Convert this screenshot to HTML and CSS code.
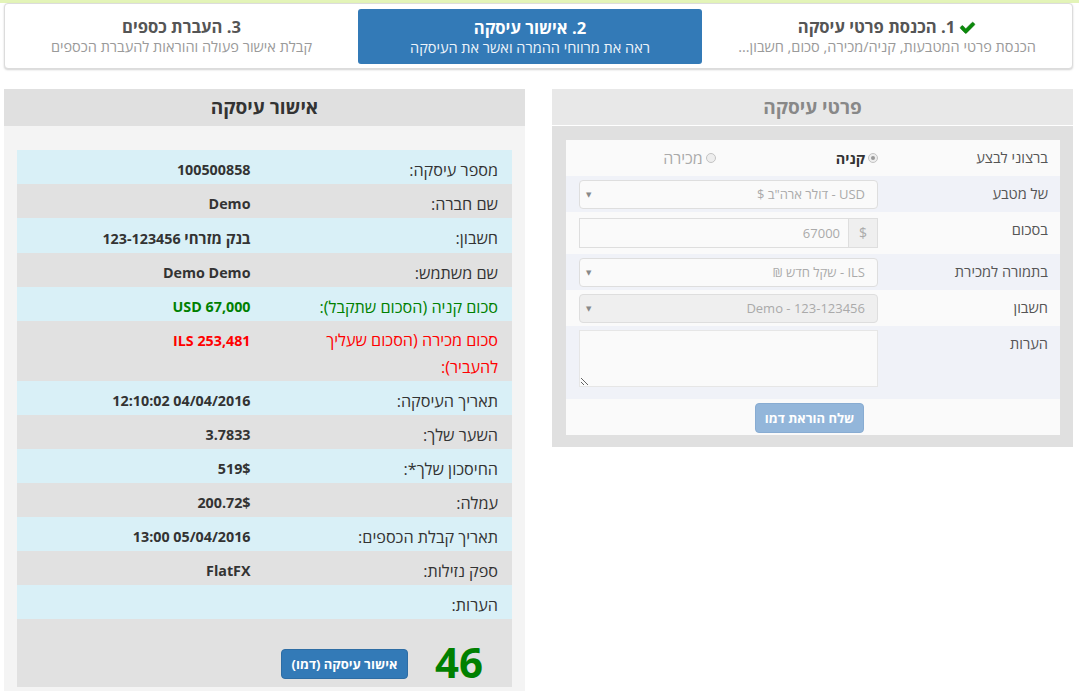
FILE: index.html
```html
<!DOCTYPE html>
<html lang="he" dir="rtl">
<head>
<meta charset="utf-8">
<title>אישור עיסקה</title>
<link rel="stylesheet" href="styles.css">
</head>
<body>
<div class="topline"></div>
<div class="steps">
  <div class="step">
    <div class="step-title"><svg class="check" viewBox="0 0 1792 1792" width="17" height="17"><path fill="#0a8a0a" stroke="#0b5e0b" stroke-width="40" d="M1671 566q0 40-28 68l-724 724-136 136q-28 28-68 28t-68-28l-136-136-362-362q-28-28-28-68t28-68l136-136q28-28 68-28t68 28l294 295 656-657q28-28 68-28t68 28l136 136q28 28 28 68z"/></svg>1. הכנסת פרטי עיסקה</div>
    <div class="step-sub">הכנסת פרטי המטבעות, קניה/מכירה, סכום, חשבון...</div>
  </div>
  <div class="step active">
    <div class="step-title">2. אישור עיסקה</div>
    <div class="step-sub">ראה את מרווחי ההמרה ואשר את העיסקה</div>
  </div>
  <div class="step">
    <div class="step-title">3. העברת כספים</div>
    <div class="step-sub">קבלת אישור פעולה והוראות להעברת הכספים</div>
  </div>
</div>

<div class="main">
  <section class="panel form-panel">
    <div class="panel-head">פרטי עיסקה</div>
    <div class="panel-body">
      <div class="form">
        <div class="frow r-odd">
          <div class="flabel">ברצוני לבצע</div>
          <div class="fctl radios">
            <span class="radio"><span class="dot on"></span><b>קניה</b></span>
            <span class="radio off"><span class="dot"></span>מכירה</span>
          </div>
        </div>
        <div class="frow r-even">
          <div class="flabel">של מטבע</div>
          <div class="fctl"><div class="select">USD - דולר ארה"ב $<span class="caret">▼</span></div></div>
        </div>
        <div class="frow r-odd tall">
          <div class="flabel">בסכום</div>
          <div class="fctl"><div class="igroup"><span class="addon">$</span><span class="input">67000</span></div></div>
        </div>
        <div class="frow r-even">
          <div class="flabel">בתמורה למכירת</div>
          <div class="fctl"><div class="select">ILS - שקל חדש ₪<span class="caret">▼</span></div></div>
        </div>
        <div class="frow r-odd">
          <div class="flabel">חשבון</div>
          <div class="fctl"><div class="select disabled">123-123456 - Demo<span class="caret">▼</span></div></div>
        </div>
        <div class="frow r-even notes">
          <div class="flabel">הערות</div>
          <div class="fctl"><textarea class="textarea"></textarea></div>
        </div>
        <div class="frow r-odd btnrow">
          <button class="btn-demo" type="button">שלח הוראת דמו</button>
        </div>
      </div>
    </div>
  </section>

  <section class="panel confirm-panel">
    <div class="panel-head dark">אישור עיסקה</div>
    <div class="panel-body light">
      <div class="table">
        <div class="trow info"><div class="tl">מספר עיסקה:</div><div class="tv">100500858</div></div>
        <div class="trow gray"><div class="tl">שם חברה:</div><div class="tv">Demo</div></div>
        <div class="trow info"><div class="tl">חשבון:</div><div class="tv"><span class="he">בנק מזרחי</span> 123-123456</div></div>
        <div class="trow gray"><div class="tl">שם משתמש:</div><div class="tv">Demo Demo</div></div>
        <div class="trow info green"><div class="tl">סכום קניה (הסכום שתקבל):</div><div class="tv">67,000 USD</div></div>
        <div class="trow gray red"><div class="tl">סכום מכירה (הסכום שעליך להעביר):</div><div class="tv">253,481 ILS</div></div>
        <div class="trow info"><div class="tl">תאריך העיסקה:</div><div class="tv">04/04/2016 12:10:02</div></div>
        <div class="trow gray"><div class="tl">השער שלך:</div><div class="tv">3.7833</div></div>
        <div class="trow info"><div class="tl">החיסכון שלך*:</div><div class="tv">519$</div></div>
        <div class="trow gray"><div class="tl">עמלה:</div><div class="tv">200.72$</div></div>
        <div class="trow info"><div class="tl">תאריך קבלת הכספים:</div><div class="tv">05/04/2016 13:00</div></div>
        <div class="trow gray"><div class="tl">ספק נזילות:</div><div class="tv">FlatFX</div></div>
        <div class="trow info"><div class="tl">הערות:</div><div class="tv"></div></div>
        <div class="tfoot">
          <span class="timer">46</span>
          <button class="btn-confirm" type="button">אישור עיסקה (דמו)</button>
        </div>
      </div>
    </div>
  </section>
</div>
</body>
</html>
```

FILE: styles.css
```css
* { box-sizing: border-box; }
html, body { margin: 0; padding: 0; }
body {
  direction: rtl;
  font-family: "Open Sans", "DejaVu Sans", sans-serif;
  font-size: 14px;
  color: #333;
  background: #fff;
  overflow: hidden;
}
.topline { height: 3px; background: #e3f4b8; }

.steps {
  margin: 0 6px 0 4px;
  height: 66px;
  border: 1px solid #dcdcdc;
  border-radius: 4px;
  box-shadow: 0 1px 2px rgba(0,0,0,0.18);
  background: #fff;
  display: grid;
  grid-template-columns: 370px 344px 1fr;
}
.step {
  display: flex;
  flex-direction: column;
  align-items: center;
  justify-content: center;
  text-align: center;
}
.step.active {
  background: #337ab7;
  border-radius: 3px;
  margin: 5px 0 4px;
}
.step-title {
  font-size: 16.6px;
  font-weight: bold;
  color: #555;
  line-height: 22px;
  display: flex;
  align-items: center;
  gap: 4px;
}
.step-sub {
  font-size: 14.5px;
  color: #9a9a9a;
  line-height: 18px;
}
.step.active .step-title { color: #fff; }
.step.active .step-sub { color: #eef4fa; }
.check { display: block; }

.main {
  display: flex;
  gap: 27px;
  padding: 20px 6px 0 4px;
  align-items: flex-start;
}
.panel { width: 521px; flex: none; }
.panel-head {
  height: 37px;
  line-height: 36px;
  text-align: center;
  font-size: 19px;
  font-weight: bold;
  color: #888;
  background: #e8e8e8;
  border-bottom: 1px solid #fff;
}
.panel-head.dark { color: #333; background: #e0e0e0; border-bottom: 0; }
.panel-body {
  background: #e0e0e0;
  padding: 14px 13px 12px 14px;
}
.panel-body.light {
  background: #f4f4f4;
  padding: 24px 13px 4px;
}

.form { width: 494px; }
.frow {
  display: flex;
  align-items: flex-start;
  min-height: 36px;
  padding: 4px 0 3px;
}
.r-odd { background: #fafafa; }
.r-even { background: #f0f2f8; }
.frow.tall { min-height: 42px; padding: 6px 0; }
.frow.notes { min-height: 73px; padding: 4px 0 12px; }
.frow.btnrow { justify-content: center; padding: 4px 0 2px; }
.flabel {
  width: 182px;
  flex: none;
  padding: 3px 12px 0 0;
  line-height: 20px;
  font-size: 14.6px;
  color: #555;
}
.frow.tall .flabel { padding-top: 1px; }
.fctl { width: 299px; flex: none; }
.radios {
  display: flex;
  align-items: center;
  height: 28px;
  font-size: 14.5px;
}
.radio { display: flex; align-items: center; gap: 3px; color: #333; }
.radio b { font-weight: bold; }
.radio.off { color: #aaa; margin-right: 120px; font-size: 16px; }
.dot {
  width: 10px; height: 10px;
  border-radius: 50%;
  border: 1px solid #c4c4c4;
  background: #eee;
  position: relative;
}
.dot.on::after {
  content: "";
  position: absolute;
  left: 2px; top: 2px;
  width: 4px; height: 4px;
  border-radius: 50%;
  background: #999;
}
.select {
  height: 29px;
  border: 1px solid #dedede;
  border-radius: 4px;
  background: #fafafa;
  color: #aaa;
  font-size: 13px;
  line-height: 27px;
  padding: 0 12px 0 20px;
  position: relative;
}
.select.disabled { background: #efefef; }
.caret {
  position: absolute;
  left: 6px;
  top: 0;
  font-size: 7px;
  color: #888;
}
.igroup { display: flex; height: 30px; }
.addon {
  width: 30px;
  flex: none;
  border: 1px solid #dedede;
  background: #efefef;
  color: #aaa;
  text-align: center;
  line-height: 28px;
  font-size: 14px;
}
.input {
  flex: 1;
  border: 1px solid #dedede;
  border-right: 0;
  background: #fafafa;
  color: #aaa;
  font-size: 13px;
  line-height: 28px;
  padding: 0 8px;
}
.textarea {
  display: block;
  width: 299px;
  height: 57px;
  margin: 0;
  border: 1px solid #e6e6e6;
  background: #fafafa;
  resize: both;
}
.btn-demo {
  width: 109px;
  height: 30px;
  margin-right: 7px;
  border: 1px solid #88acd2;
  border-radius: 4px;
  background: #93b6da;
  color: #fff;
  font-family: inherit;
  font-size: 13px;
  font-weight: bold;
  padding: 0;
}

.table { width: 495px; }
.trow { display: flex; }
.trow.info { background: #d9f0f7; }
.trow.gray { background: #e1e1e1; }
.tl, .tv {
  width: 50%;
  padding: 7px 14px 1px;
  line-height: 26px;
}
.tl { color: #333; font-size: 16.2px; }
.tv { font-weight: bold; color: #333; font-size: 14.3px; }
.tv .he { font-size: 15px; }
.trow.green .tl, .trow.green .tv { color: #008000; }
.trow.red .tl, .trow.red .tv { color: #ff0000; }
.trow.red .tl { line-height: 27px; padding: 6px 14px 0; }
.tfoot {
  height: 68px;
  background: #e1e1e1;
  display: flex;
  align-items: flex-end;
  padding: 0 29px 8px 0;
  gap: 27px;
}
.timer {
  font-size: 42px;
  font-weight: bold;
  color: #008000;
  line-height: 42px;
  margin-bottom: -4px;
}
.btn-confirm {
  width: 127px;
  height: 30px;
  border: 1px solid #2e6da4;
  border-radius: 4px;
  background: #337ab7;
  color: #fff;
  font-family: inherit;
  font-size: 13px;
  font-weight: bold;
  padding: 0;
}
```
